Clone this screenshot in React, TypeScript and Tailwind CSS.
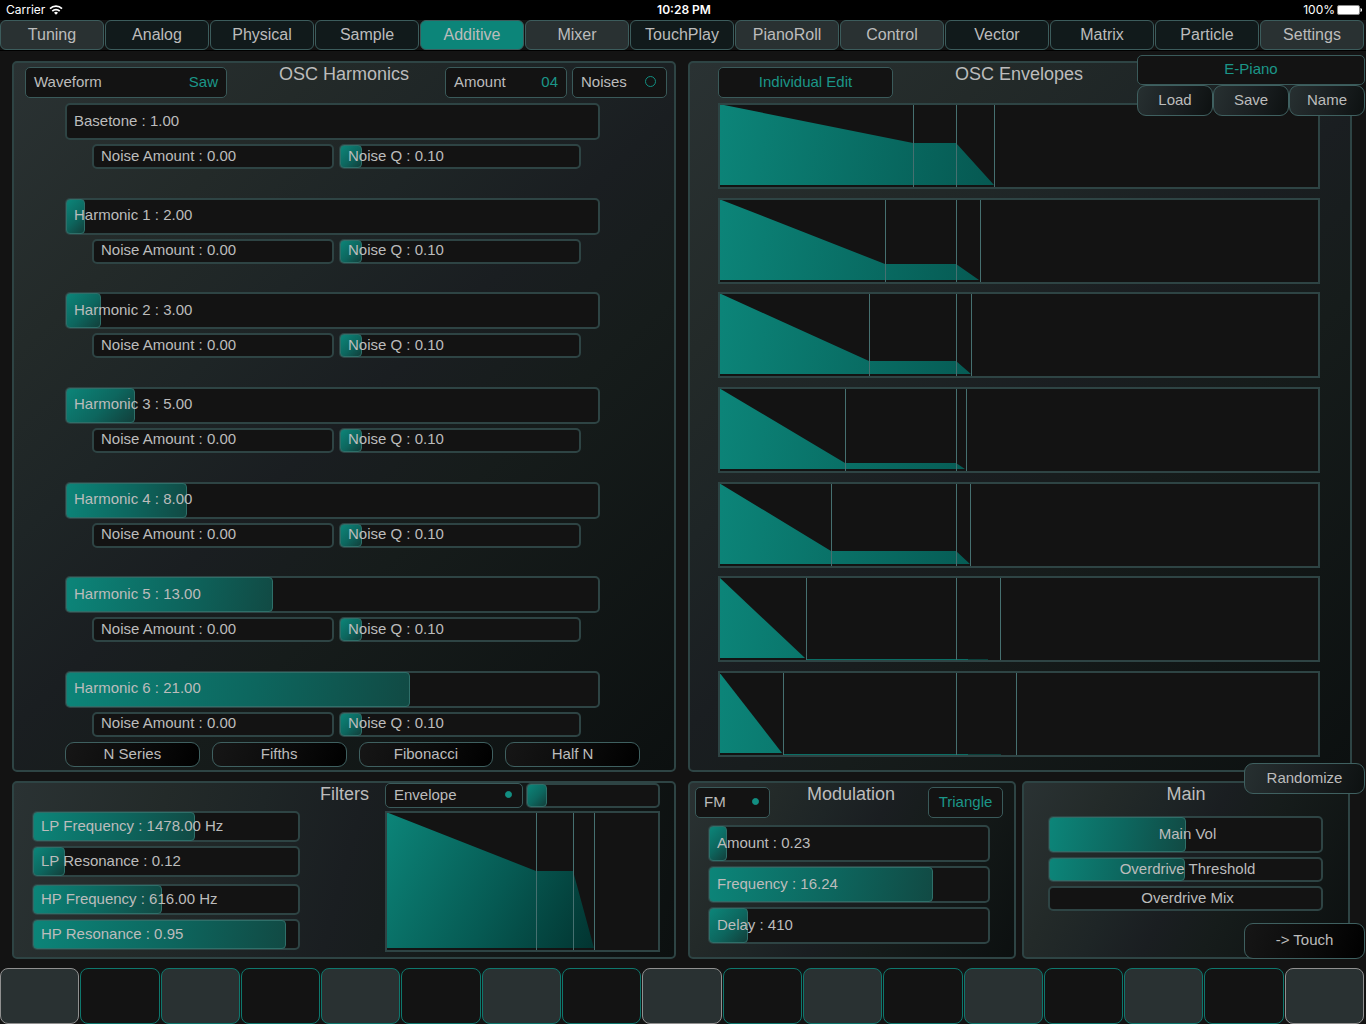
import { useState } from 'react';
import clsx from 'clsx';

const TABS = [
  { name: 'Tuning', tone: 'light' },
  { name: 'Analog', tone: 'dark' },
  { name: 'Physical', tone: 'dark' },
  { name: 'Sample', tone: 'dark' },
  { name: 'Additive', tone: 'dark' },
  { name: 'Mixer', tone: 'light' },
  { name: 'TouchPlay', tone: 'dark' },
  { name: 'PianoRoll', tone: 'light' },
  { name: 'Control', tone: 'light' },
  { name: 'Vector', tone: 'dark' },
  { name: 'Matrix', tone: 'dark' },
  { name: 'Particle', tone: 'dark' },
  { name: 'Settings', tone: 'light' },
];

const HARMONICS = [
  { label: 'Basetone : 1.00', fill: 0 },
  { label: 'Harmonic 1 : 2.00', fill: 3.5 },
  { label: 'Harmonic 2 : 3.00', fill: 6.6 },
  { label: 'Harmonic 3 : 5.00', fill: 13 },
  { label: 'Harmonic 4 : 8.00', fill: 22.8 },
  { label: 'Harmonic 5 : 13.00', fill: 39 },
  { label: 'Harmonic 6 : 21.00', fill: 64.8 },
];

// decay, sustain and release are x positions, level is the y of the sustain stage
const ENVELOPES = [
  { decay: 195, level: 40, sustain: 238, release: 276, end: 276 },
  { decay: 167, level: 66, sustain: 238, release: 261, end: 262 },
  { decay: 151, level: 69, sustain: 238, release: 253, end: 253 },
  { decay: 127, level: 76, sustain: 238, release: 247, end: 248 },
  { decay: 113, level: 69, sustain: 238, release: 252, end: 252 },
  { decay: 88, level: 83, sustain: 238, release: 270, end: 282 },
  { decay: 65, level: 83, sustain: 238, release: 283, end: 298 },
];

const PRESETS = ['N Series', 'Fifths', 'Fibonacci', 'Half N'];

const BOX = 'border border-[#3a5a5a] rounded-[5px] bg-[#131313] pb-0.5 text-[15px] leading-5';
const PANEL = 'border-2 border-[#2e4444] rounded-[5px]';
const TALL_BG =
  'bg-[linear-gradient(137deg,#2a3233_0%,#232a29_22%,#1e2526_36%,#1a1e21_50%,#161c1b_64%,#0c1010_100%)]';
const WIDE_BG =
  'bg-[linear-gradient(105deg,#2a3233_0%,#232a29_22%,#1e2526_36%,#1a1e21_50%,#161c1b_64%,#0c1010_100%)]';
const HALF_BG =
  'bg-[linear-gradient(118deg,#2a3233_0%,#232a29_22%,#1e2526_36%,#1a1e21_50%,#161c1b_64%,#0c1010_100%)]';
const RAISED =
  'border border-[#3f6060] rounded-[9px] pb-0.5 text-[15px] leading-5 bg-[linear-gradient(108deg,#273031,#1a1f21_55%,#0d1111)]';
const RAISED_DARK =
  'border border-[#3f6060] rounded-[9px] pb-0.5 text-[15px] leading-5 bg-[linear-gradient(108deg,#161616,#0b0b0b_55%,#000000)]';

function Slider({ label, fill, className, centered, hideLabel }: {
  label: string;
  fill: number;
  className?: string;
  centered?: boolean;
  hideLabel?: boolean;
}) {
  const [value, setValue] = useState(fill);
  return (
    <label className={clsx('relative flex items-center border-2 border-[#2e4444] rounded-[5px] bg-[#131313]', centered ? 'justify-center pl-1' : 'px-[7px]', className)}>
      {value > 0 && (
        <span
          className={clsx(
            'absolute -left-px -inset-y-px border border-[#2f6f69] rounded-[4px]',
            value < 15.5
              ? 'bg-[linear-gradient(135deg,#0c8579,#0d665e_55%,#123f3b)]'
              : 'bg-[linear-gradient(100deg,#0c8579,#0d665e_55%,#114a44)]'
          )}
          style={{ width: `${value}%` }}
        />
      )}
      {!hideLabel && <span className="relative pb-0.5 text-[15px] leading-5 whitespace-nowrap">{label}</span>}
      <input
        type="range"
        aria-label={hideLabel ? label : undefined}
        min={0}
        max={100}
        step={0.1}
        value={value}
        onChange={(e) => setValue(Number(e.target.value))}
        className="absolute inset-0 w-full h-full opacity-0 cursor-pointer"
      />
    </label>
  );
}

function Toggle({ label, on, className }: { label: string; on?: boolean; className?: string }) {
  return (
    <label className={clsx('flex items-center justify-between pl-2', BOX, className)}>
      {label}
      <input
        type="checkbox"
        defaultChecked={on}
        className="appearance-none size-[11px] rounded-full border border-[#128f82] checked:size-[7px] checked:mx-0.5 checked:bg-[#128f82]"
      />
    </label>
  );
}

function Envelope({ id, width, height, decay, level, sustain, release, end, className }: {
  id: string;
  width: number;
  height: number;
  decay: number;
  level: number;
  sustain: number;
  release: number;
  end: number;
  className?: string;
}) {
  const floor = height - 4;
  const flat = level >= floor;
  return (
    <div className={clsx('border-2 border-[#2e4444] bg-[#131313]', className)}>
      <svg
        viewBox={`2 2 ${width - 4} ${height - 4}`}
        preserveAspectRatio="none"
        className="block w-full h-full"
        role="img"
        aria-label="Envelope curve"
      >
        <defs>
          <linearGradient id={id} gradientUnits="userSpaceOnUse" x1="0" y1="0" x2={width} y2={height}>
            <stop offset="0" stopColor="#0c8579" />
            <stop offset="0.45" stopColor="#065a53" />
            <stop offset="1" stopColor="#001f1d" />
          </linearGradient>
        </defs>
        {flat ? (
          <>
            <polygon points={`1,1 ${decay - 1},${floor} 1,${floor}`} fill={`url(#${id})`} />
            <rect x={decay} y={height - 3} width={sustain + 12 - decay} height="1" fill="#0a6d64" />
            <rect x={sustain + 12} y={height - 3} width={release - sustain - 12} height="1" fill="#0b403b" />
          </>
        ) : (
          <polygon
            points={`1,1 ${decay},${level} ${sustain},${level} ${release},${floor} 1,${floor}`}
            fill={`url(#${id})`}
          />
        )}
        {[decay, sustain, end].map((x) => (
          <rect key={x} x={x} y="1" width="1" height={height - 3} fill="#467070" />
        ))}
      </svg>
    </div>
  );
}

function StatusBar() {
  return (
    <header className="grid grid-cols-3 items-center h-5 pl-1.5 pr-1 bg-black text-white text-[12px] leading-5 font-['Inter',sans-serif]">
      <div className="flex items-center gap-1">
        Carrier
        <svg width="14" height="10" viewBox="0 0 14 10" fill="none" stroke="white" strokeWidth="1.7" aria-hidden="true">
          <path d="M1 3.700a8.500 8.500 0 0 1 12 0" />
          <path d="M3.300 6.100a5.200 5.200 0 0 1 7.400 0" />
          <path d="M7 9.700 5 7.700a2.800 2.800 0 0 1 4 0z" fill="white" stroke="none" />
        </svg>
      </div>
      <div className="text-center font-semibold">10:28 PM</div>
      <div className="flex items-center justify-end gap-0.5">
        100%
        <svg width="25" height="10" viewBox="0 0 25 10" aria-hidden="true">
          <rect x="0.5" y="0.5" width="22" height="9" rx="1.5" fill="white" stroke="#8a8a8a" />
          <path d="M23.500 3v4c1-.3 1.500-1 1.500-2s-.5-1.700-1.500-2z" fill="white" />
        </svg>
      </div>
    </header>
  );
}

export default function App() {
  const [tab, setTab] = useState('Additive');

  return (
    <div className="relative flex flex-col min-h-screen overflow-hidden bg-[#131313] text-[#bcbcbc] font-['Liberation_Sans',Arial,sans-serif]">
      <StatusBar />

      <nav className="flex gap-px pr-0.5 border-b border-black bg-[#131313]">
        {TABS.map((t) => (
          <button
            key={t.name}
            onClick={() => setTab(t.name)}
            className={clsx(
              'flex-1 h-[30px] border border-[#3c5c5c] rounded-[6px] text-[16px] leading-5',
              tab === t.name ? 'bg-[#0c8579]' : t.tone === 'light' ? 'bg-[#293132]' : 'bg-[#111a1b]'
            )}
          >
            {t.name}
          </button>
        ))}
      </nav>

      <main className="flex-1 flex flex-col gap-[9px] pt-2.5 pb-[9px]">
        <div className="flex-1 grid grid-cols-2 gap-3 pl-3 pr-3.5">
          {/* OSC Harmonics */}
          <section className={clsx('flex flex-col', PANEL, TALL_BG)}>
            <div className="grid grid-cols-[1fr_auto_1fr] items-start px-[7px]">
              <button className={clsx('flex items-center justify-between w-[202px] h-[31px] ml-1 mt-1 px-2', BOX)}>
                Waveform <span className="text-[#1b9688]">Saw</span>
              </button>
              <h2 className="text-[18px] leading-[22px]">OSC Harmonics</h2>
              <div className="flex justify-end gap-[5px] pt-1">
                <button className={clsx('flex items-center justify-between w-[122px] h-[31px] px-2', BOX)}>
                  Amount <span className="text-[#1b9688]">04</span>
                </button>
                <Toggle label="Noises" className="w-[95px] h-[31px] pr-2.5" />
              </div>
            </div>
            <div className="flex-1 flex flex-col justify-between gap-2 pt-[5px] pl-[51px] pr-[74px]">
              {HARMONICS.map((h) => (
                <div key={h.label}>
                  <Slider label={h.label} fill={h.fill} className="h-[37px]" />
                  <div className="grid grid-cols-2 gap-[5px] mt-1 pl-[27px] pr-[19px]">
                    <Slider label="Noise Amount : 0.00" fill={0} className="h-[25px]" />
                    <Slider label="Noise Q : 0.10" fill={9.3} className="h-[25px]" />
                  </div>
                </div>
              ))}
            </div>
            <div className="grid grid-cols-4 gap-3 mt-[5px] pl-[51px] pr-[34px] pb-[3px]">
              {PRESETS.map((p) => (
                <button key={p} className={clsx('h-[25px]', RAISED_DARK)}>{p}</button>
              ))}
            </div>
          </section>

          {/* OSC Envelopes */}
          <section className={clsx('flex flex-col', PANEL, TALL_BG)}>
            <div className="grid grid-cols-[1fr_auto_1fr] items-start pl-7 pr-[30px]">
              <button className={clsx('w-[175px] h-[31px] mt-1 text-[#1b9688]', BOX)}>Individual Edit</button>
              <h2 className="text-[18px] leading-[22px]">OSC Envelopes</h2>
            </div>
            <div className="flex-1 flex flex-col justify-between gap-2 pt-[5px] pl-7 pr-[30px] pb-[13px]">
              {ENVELOPES.map((env, i) => (
                <Envelope key={i} id={`osc-env-${i}`} width={602} height={86} {...env} className="h-[86px]" />
              ))}
            </div>
          </section>
        </div>

        <div className="relative grid grid-cols-2 gap-3 pl-3 pr-3.5">
          {/* Filters */}
          <section className={clsx('grid grid-cols-[268fr_85fr_275fr] items-start pl-[18px] pr-3.5 pb-[5px]', PANEL, WIDE_BG)}>
            <div className="flex flex-col gap-1 pt-7">
              <Slider label="LP Frequency : 1478.00 Hz" fill={61.3} className="h-[31px]" />
              <Slider label="LP Resonance : 0.12" fill={12} className="h-[31px]" />
              <Slider label="HP Frequency : 616.00 Hz" fill={48.7} className="h-[31px] mt-[3px]" />
              <Slider label="HP Resonance : 0.95" fill={95.8} className="h-[31px]" />
            </div>
            <h2 className="pl-1 text-[18px] leading-[22px] text-center">Filters</h2>
            <div>
              <div className="grid grid-cols-[138fr_134fr] gap-[3px]">
                <Toggle label="Envelope" on className="h-[25px] pr-2" />
                <Slider label="Envelope depth" hideLabel fill={15} className="h-[25px]" />
              </div>
              <Envelope
                id="filter-env"
                width={275}
                height={141}
                decay={151}
                level={60}
                sustain={188}
                release={209}
                end={209}
                className="h-[141px] mt-[3px]"
              />
            </div>
          </section>

          <div className="grid grid-cols-2 gap-1.5 pr-0.5">
            {/* Modulation */}
            <section className={clsx(PANEL, HALF_BG)}>
              <div className="grid grid-cols-[1fr_auto_1fr] items-start pl-[5px] pr-[11px]">
                <Toggle label="FM" on className="w-[75px] h-[31px] mt-1 pr-2" />
                <h2 className="pl-1 text-[18px] leading-[22px]">Modulation</h2>
                <button className={clsx('justify-self-end w-[75px] h-[31px] mt-1 text-[#1b9688]', BOX)}>Triangle</button>
              </div>
              <div className="flex flex-col gap-1 pt-[7px] pl-[18px] pr-6">
                <Slider label="Amount : 0.23" fill={6.4} className="h-[37px]" />
                <Slider label="Frequency : 16.24" fill={80.4} className="h-[37px]" />
                <Slider label="Delay : 410" fill={14.2} className="h-[37px]" />
              </div>
            </section>

            {/* Main */}
            <section className={clsx(PANEL, HALF_BG)}>
              <h2 className="text-[18px] leading-[22px] text-center">Main</h2>
              <div className="flex flex-col gap-1 pt-[11px] pl-6 pr-[25px]">
                <Slider label="Main Vol" fill={50.4} centered className="h-[37px]" />
                <Slider label="Overdrive Threshold" fill={50} centered className="h-[25px]" />
                <Slider label="Overdrive Mix" fill={0} centered className="h-[25px]" />
              </div>
            </section>
          </div>

          <button className={clsx('absolute -top-[18px] right-px w-[121px] h-[31px]', RAISED)}>Randomize</button>
          <button className={clsx('absolute bottom-0 right-px w-[121px] h-9', RAISED_DARK)}>-&gt; Touch</button>
        </div>
      </main>

      {/* Touch keyboard */}
      <div className="flex gap-px pr-0.5">
        {Array.from({ length: 17 }, (_, i) => (
          <button
            key={i}
            aria-label={`Key ${i + 1}`}
            className={clsx(
              'flex-1 h-14 border rounded-[8px]',
              i % 8 === 0 ? 'border-[#909090]' : 'border-[#0e776d]',
              i % 2 === 0 ? 'bg-[#293132]' : 'bg-[#131313]'
            )}
          />
        ))}
      </div>

      {/* Preset browser floats over the envelope panel */}
      <div className="absolute top-[55px] right-px w-[228px]">
        <button className={clsx('block w-full h-[30px] text-[#1b9688]', BOX)}>E-Piano</button>
        <div className="grid grid-cols-3">
          {['Load', 'Save', 'Name'].map((n) => (
            <button key={n} className={clsx('h-[31px]', RAISED)}>{n}</button>
          ))}
        </div>
      </div>
    </div>
  );
}
